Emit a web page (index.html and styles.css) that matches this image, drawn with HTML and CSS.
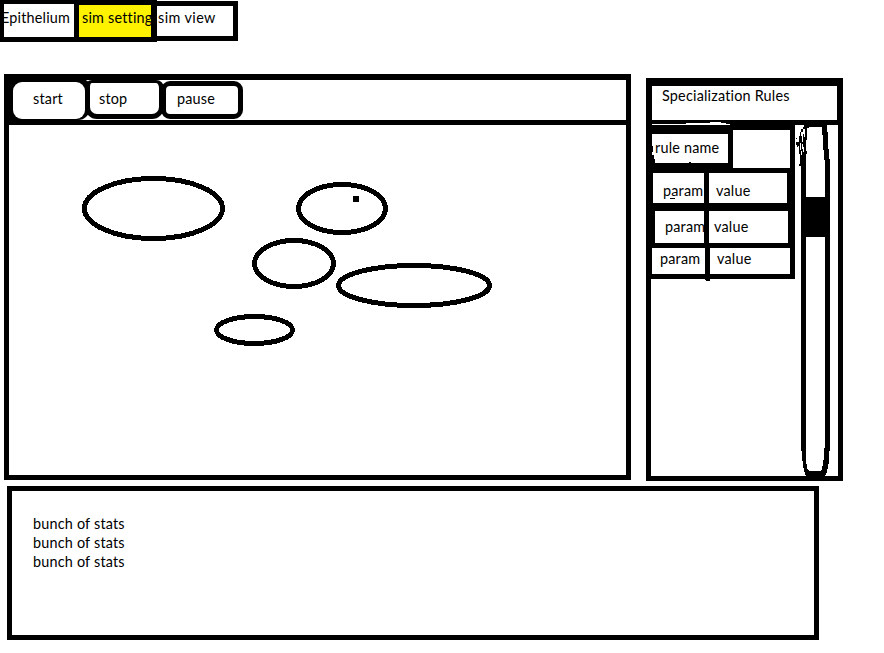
FILE: index.html
```html
<!DOCTYPE html>
<html lang="en">
<head>
<meta charset="utf-8">
<title>Epithelium simulator</title>
<link rel="stylesheet" href="styles.css">
</head>
<body>
<nav class="tabs">
  <div class="tab tab-epithelium"><span>Epithelium</span></div>
  <div class="tab tab-setting"><span>sim setting</span></div>
  <div class="tab tab-view"><span>sim view</span></div>
</nav>
<main class="workspace">
  <section class="simulation">
    <div class="toolbar">
      <div class="button start"><span>start</span></div>
      <div class="button stop"><span>stop</span></div>
      <div class="button pause"><span>pause</span></div>
    </div>
    <svg class="cells" width="617" height="350" viewBox="9 125 617 350">
      <g fill="none" stroke="#000" stroke-width="5">
        <ellipse cx="153.5" cy="208.5" rx="69" ry="30"/>
        <ellipse cx="342" cy="208.5" rx="43.5" ry="24"/>
        <ellipse cx="294" cy="263.5" rx="39.5" ry="23"/>
        <ellipse cx="414" cy="285.5" rx="75.5" ry="20"/>
        <ellipse cx="254.5" cy="330" rx="38" ry="13.5"/>
      </g>
      <rect x="353" y="196" width="6" height="6"/>
    </svg>
  </section>
  <aside class="rules">
    <h2 class="rules-title">Specialization Rules</h2>
    <div class="rules-body">
      <div class="rule">
        <svg class="edge" width="144" height="5" viewBox="651 125 144 5"><path d="M651 125h144v5H651z"/></svg>
        <div class="rule-head">
          <div class="rule-name"><span>rule name</span></div>
          <div class="rule-blank"></div>
        </div>
        <div class="row row-1"><div class="param"><span>param</span></div><div class="value"><span>value</span></div></div>
        <div class="row row-2"><div class="param"><span>param</span></div><div class="value"><span>value</span></div></div>
        <div class="row row-3"><div class="param"><span>param</span></div><div class="value"><span>value</span></div></div>
      </div>
      <svg class="scroll" width="43" height="351" viewBox="795 125 43 351">
        <path d="M804 125h23l1 14 1 20 1 1v281l-1 20-2 11-2 4h-19l-2-5-2-13-1-14V136h4v-6l2-3h-3z"/>
        <path fill="#fff" d="M807 127h15v3l1 10 1 20h1v37h-19v-57h1zM806 237h19v202l-1 18-2 12-2 2h-11l-2-2-1-11z"/>
        <path d="M796 138h1v4h2v-6h1v-4h1v-3h2v-2h3v-2h3v3h-3v1h-1v22h2v3h-1v2h-1v7h-2v-8h-1v8h-1v3h-2v-2h1v-10h-1v-7h-2v-2h-1v-3h1v-3h-1z"/>
        <path fill="#fff" d="M803 129h2v8h-1v-3h-1v8h-1v-6h-1v-4h2zM800 143h1v7h-1zM802 144h1v5h-1zM803 147h1v5h-1zM801 151h1v4h-1zM798 146h1v2h-1z"/>
      </svg>
    </div>
    <svg class="overlay" width="192" height="164" viewBox="651 120 192 164">
      <path fill="#fff" d="M652 124h34v-1h24v-1h11v1h5v1h4v1h-78z"/>
      <path d="M651 146h2v6h-1v3h2l1 8h-4zM689 162h2v2h-2zM670 198h5v1h-5zM705 278h5v2l-1 1h-3l-1-1zM704 204h5v42h-3v-22h-2z"/>
    </svg>
  </aside>
</main>
<section class="stats">
  <p>bunch of stats</p>
  <p>bunch of stats</p>
  <p>bunch of stats</p>
</section>
</body>
</html>
```

FILE: styles.css
```css
* { box-sizing: border-box; }
body {
  margin: 0;
  width: 884px;
  height: 653px;
  overflow: hidden;
  background: #fff;
  color: #000;
  font: 14.4px/19px Lato, sans-serif;
  letter-spacing: 0.2px;
  font-variant-ligatures: none;
  white-space: nowrap;
}
svg { display: block; shape-rendering: crispEdges; }
span { display: block; }

.tabs { display: flex; align-items: flex-start; height: 74px; }
.tab { border: 5px solid #000; height: 42px; overflow: hidden; }
.tab-epithelium { width: 74px; border-width: 4px 0 5px 4px; }
.tab-epithelium span { margin: 4px 0 0 -3px; }
.tab-setting { width: 83px; border-right-width: 6px; background: #fff200; }
.tab-setting span { margin: 3px 0 0 3px; }
.tab-view { width: 81px; height: 40px; margin-top: 1px; border-left: 0; }
.tab-view span { margin: 2px 0 0 1px; letter-spacing: 0.4px; }

.workspace { display: flex; align-items: flex-start; gap: 15px; height: 412px; padding-left: 4px; }
.simulation { width: 627px; height: 406px; border: 5px solid #000; border-top-width: 6px; }
.toolbar { display: flex; align-items: flex-start; height: 45px; border-bottom: 5px solid #000; }
.button { border: 5px solid #000; }
.start { width: 81px; height: 41px; border-width: 3px 5px 2px 5px; border-radius: 0 8px 12px 0; margin-top: -1px; background: #000; }
.start span { height: 37px; margin-left: -1px; border-radius: 9px; background: #fff; padding: 7px 0 0 20px; }
.stop { width: 79px; height: 39px; margin: 0 0 0 -5px; border-radius: 7px 8px 12px 12px; border-top-width: 3px; }
.stop span { margin: 6px 0 0 9px; }
.pause { width: 82px; height: 38px; margin: 1px 0 0 -3px; border-radius: 9px; }
.pause span { margin: 3px 0 0 11px; }

.rules { position: relative; width: 197px; height: 403px; margin-top: 4px; border: 5px solid #000; border-top-width: 8px; }
.rules-title { margin: 0; height: 39px; padding-left: 10px; border: solid #000; border-width: 0 1px 5px 1px; font: inherit; }
.rules-body { display: flex; align-items: flex-start; }
.rule { width: 144px; height: 154px; background: #000; }
.rule-head { display: flex; height: 43px; padding-left: 1px; }
.rule-name { width: 76px; height: 29px; margin: 4px 5px 0 0; padding: 4px 0 0 3px; background: #fff; }
.rule-blank { width: 57px; height: 38px; background: #fff; }
.row { display: flex; gap: 5px; }
.row > div { background: #fff; }
.row-1 { height: 30px; padding-left: 2px; margin-bottom: 8px; }
.row-1 .param { width: 51px; padding: 8px 0 0 10px; }
.row-1 .value { width: 78px; padding: 8px 0 0 7px; }
.row-2 { height: 32px; padding-left: 4px; margin-bottom: 5px; }
.row-2 .param { width: 49px; padding: 6px 0 0 10px; }
.row-2 .value { width: 79px; padding: 6px 0 0 5px; }
.row-3 { height: 26px; padding-left: 1px; }
.row-3 .param { width: 53px; padding: 1px 0 0 8px; }
.row-3 .value { width: 80px; padding: 1px 0 0 7px; }
.overlay { position: absolute; left: 0; top: 34px; pointer-events: none; }

.stats { width: 812px; height: 154px; margin-left: 7px; padding: 23px 0 0 21px; border: 5px solid #000; }
.stats p { margin: 0; }
```
